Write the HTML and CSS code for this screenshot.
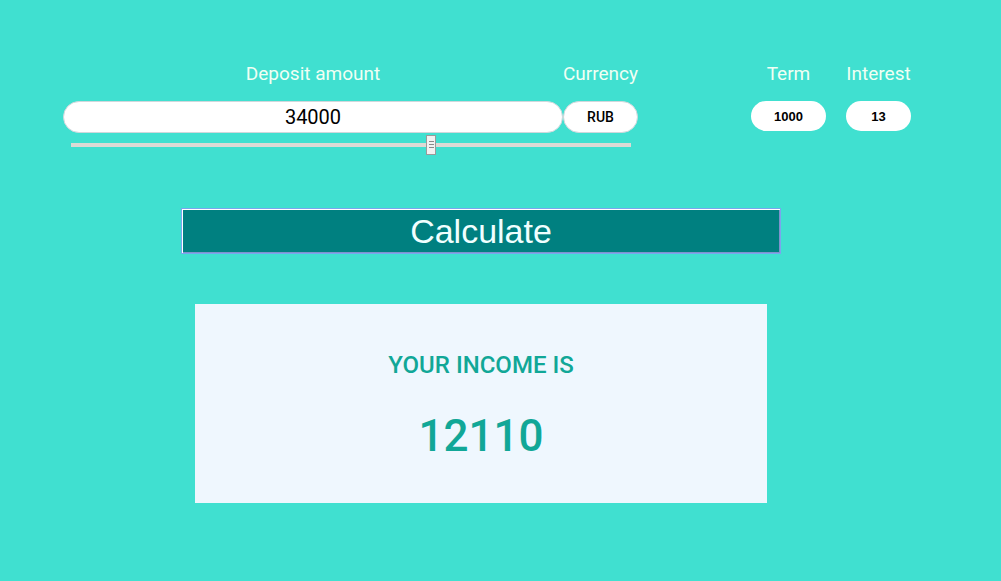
FILE: index.html
```html
<!DOCTYPE html>
<html lang="en">
<head>
<meta charset="utf-8">
<title>Deposit calculator</title>
<link rel="stylesheet" href="styles.css">
</head>
<body>
<main class="page">
  <section class="controls">
    <div class="deposit-group">
      <div class="fields">
        <label class="field deposit">
          <span class="label">Deposit amount</span>
          <input class="pill amount" type="text" value="34000">
        </label>
        <div class="field currency">
          <span class="label">Currency</span>
          <button class="pill currency-btn" type="button">RUB</button>
        </div>
      </div>
      <input class="slider" type="range" min="0" max="52700" step="1" value="34000">
    </div>
    <label class="field term">
      <span class="label">Term</span>
      <input class="pill small" type="text" value="1000">
    </label>
    <label class="field interest">
      <span class="label">Interest</span>
      <input class="pill small" type="text" value="13">
    </label>
  </section>

  <button class="calc" type="button">Calculate</button>

  <section class="result">
    <h2 class="result-title">YOUR INCOME IS</h2>
    <p class="result-value">12110</p>
  </section>
</main>
</body>
</html>
```

FILE: styles.css
```css
html, body {
  margin: 0;
  padding: 0;
}

body {
  background: #40e0d0;
  font-family: Roboto, "Liberation Sans", Arial, sans-serif;
  width: 1001px;
  height: 581px;
  overflow: hidden;
}

.page {
  width: 962px;
  padding-top: 63px;
  display: flex;
  flex-direction: column;
  align-items: center;
}

.controls {
  align-self: flex-start;
  display: flex;
  align-items: flex-start;
  padding-left: 63px;
}

.deposit-group {
  display: flex;
  flex-direction: column;
  width: 575px;
}

.fields {
  display: flex;
}

.field {
  display: flex;
  flex-direction: column;
  align-items: center;
}

.label {
  font-size: 19px;
  line-height: 21px;
  color: #f0fff4;
  margin-bottom: 17px;
  white-space: nowrap;
}

.pill {
  box-sizing: border-box;
  border-radius: 16px;
  background: #fff;
  text-align: center;
  outline: none;
  margin: 0;
  padding: 0;
}

.deposit {
  width: 500px;
}

.amount {
  width: 500px;
  height: 32px;
  border: 1px solid #cfd8dc;
  font-family: Roboto, sans-serif;
  font-size: 20px;
  color: #000;
}

.currency {
  width: 75px;
}

.currency-btn {
  width: 75px;
  height: 32px;
  border: 1px solid #cfd8dc;
  font-family: Roboto, sans-serif;
  font-weight: 500;
  font-size: 14px;
  color: #000;
  cursor: pointer;
}

.term {
  width: 75px;
  margin-left: 113px;
}

.interest {
  width: 65px;
  margin-left: 20px;
}

.small {
  width: 100%;
  height: 30px;
  border: none;
  border-radius: 15px;
  font-family: "Liberation Sans", Arial, sans-serif;
  font-weight: bold;
  font-size: 13px;
  color: #000;
}

.slider {
  -webkit-appearance: none;
  appearance: none;
  width: 560px;
  height: 20px;
  margin: 2px 0 0 8px;
  padding: 0;
  background: transparent;
}

.slider::-webkit-slider-runnable-track {
  height: 4px;
  background: #dcdad5;
  border: none;
}

.slider::-webkit-slider-thumb {
  -webkit-appearance: none;
  appearance: none;
  box-sizing: border-box;
  width: 10px;
  height: 20px;
  margin-top: -8px;
  border: 1px solid #9a9a9a;
  background:
    linear-gradient(#8a8a8a, #8a8a8a) 2px 5px / 5px 1px no-repeat,
    linear-gradient(#8a8a8a, #8a8a8a) 2px 8px / 5px 1px no-repeat,
    linear-gradient(#8a8a8a, #8a8a8a) 2px 11px / 5px 1px no-repeat,
    #f2f2f2;
}

.calc {
  box-sizing: border-box;
  width: 600px;
  height: 46px;
  margin-top: 53px;
  padding: 0;
  background: #008080;
  border: 1px solid #7aa6ee;
  box-shadow: inset 1px 1px 0 #ffffff, inset -1px -1px 0 #7f92cc;
  font-family: "Liberation Sans", Arial, sans-serif;
  font-size: 34px;
  line-height: 40px;
  color: #f0ffff;
  cursor: pointer;
}

.result {
  box-sizing: border-box;
  width: 572px;
  height: 199px;
  margin-top: 50px;
  padding-top: 47px;
  background: #eff7fe;
  display: flex;
  flex-direction: column;
  align-items: center;
  color: #11a797;
}

.result-title {
  margin: 0;
  font-size: 24px;
  line-height: 28px;
  font-weight: 500;
}

.result-value {
  margin: 31px 0 0;
  font-size: 44px;
  line-height: 52px;
  font-weight: 500;
}
```
